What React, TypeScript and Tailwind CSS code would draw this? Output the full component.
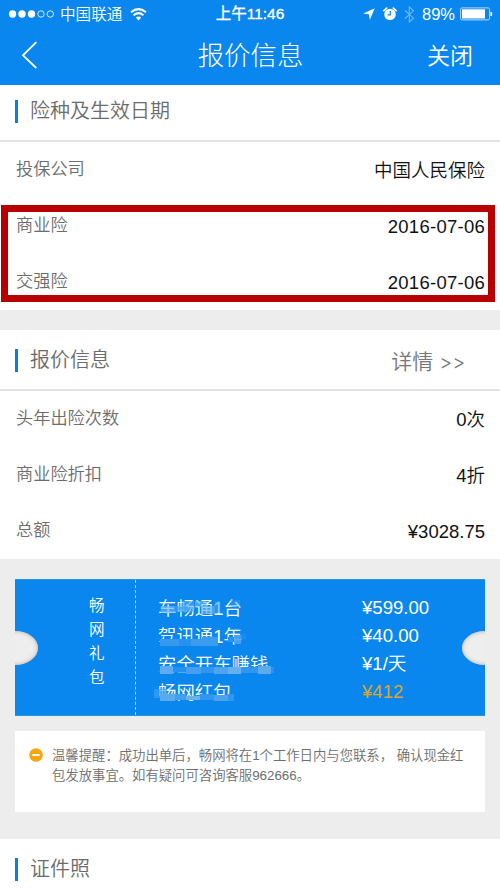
import React from 'react';

interface RowProps {
  label: string;
  value: string;
  wide?: boolean;
}

const Row: React.FC<RowProps> = ({ label, value, wide }) => (
  <div className="h-14 flex items-center justify-between pt-0.5 pl-4 pr-[15px]">
    <span className="pb-1 text-[17.2px] leading-6 text-[#6c6c6c]">{label}</span>
    <span
      className={`text-[18.5px] leading-6 text-[#111] ${wide ? 'tracking-[0.26px]' : ''}`}
    >
      {value}
    </span>
  </div>
);

interface SectionTitleProps {
  title: string;
  extra?: string;
}

const SectionTitle: React.FC<SectionTitleProps> = ({ title, extra }) => (
  <div className="flex items-center justify-between pl-[15px] pr-[35px]">
    <div className="flex items-center">
      <span className="w-[3px] h-[23px] bg-[#0a80dc]" />
      <h2 className="ml-3 text-[20px] leading-6 text-[#6b6b6b]">{title}</h2>
    </div>
    {extra && (
      <span className="pt-1 flex items-baseline gap-[6px] text-[21px] leading-6 text-[#777]">
        {extra}
        <span className="font-['Inter'] font-light text-[20px] tracking-[-0.2px]">
          &gt;&gt;
        </span>
      </span>
    )}
  </div>
);

const gifts = [
  { name: '车畅通1台', price: '¥599.00' },
  { name: '驾讯通1年', price: '¥40.00' },
  { name: '安全开车赚钱', price: '¥1/天' },
  { name: '畅网红包', price: '¥412', highlight: true },
];

// x, y, width, height, fill, opacity
const mosaic: [number, number, number, number, string, number][] = [
  [5, 27, 14, 7, '#62b1f6', 0.65],
  [19, 27, 13, 6, '#3b9cf3', 0.65],
  [26, 22, 12, 11, '#4ca6f4', 0.6],
  [39, 22, 12, 6, '#71bbf8', 0.6],
  [45, 27, 14, 8, '#61b2f7', 0.65],
  [59, 22, 5, 12, '#3c9df4', 0.6],
  [75, 21, 9, 7, '#3c9df4', 0.4],
  [4, 60, 19, 7, '#3698ef', 1],
  [23, 60, 12, 7, '#2791f0', 1],
  [35, 60, 27, 7, '#3b9bef', 1],
  [46, 58, 16, 4, '#3c9df3', 1],
  [72, 58, 6, 5, '#2993f1', 1],
  [78, 56, 7, 9, '#4aa4f2', 0.9],
  [85, 55, 5, 5, '#2490f1', 0.7],
  [4, 87, 13, 8, '#5eacef', 1],
  [17, 88, 13, 5, '#2490f1', 1],
  [30, 88, 15, 7, '#469fec', 1],
  [45, 88, 13, 6, '#3196ef', 1],
  [58, 88, 14, 7, '#4ea5ee', 1],
  [72, 88, 13, 7, '#66b0ed', 1],
  [85, 88, 17, 6, '#3196ef', 1],
  [102, 87, 13, 8, '#5aaaec', 1],
  [115, 88, 3, 6, '#2892f1', 1],
  [-2, 110, 13, 9, '#3f9eef', 0.65],
  [4, 115, 15, 7, '#5caaee', 1],
  [19, 115, 11, 6, '#429eef', 1],
  [30, 117, 14, 4, '#68b1ec', 1],
  [44, 115, 14, 6, '#3497ef', 1],
  [58, 116, 14, 6, '#4ba2ed', 1],
  [72, 115, 6, 7, '#3196ef', 1],
];

const StatusBar: React.FC = () => (
  <div className="h-7 grid grid-cols-[1fr_auto_1fr] items-center pl-[9px] pr-[7px] text-[15.6px] leading-5">
    <div className="flex items-center">
      <svg width="46" height="10" viewBox="0 0 46 10" fill="none">
        <circle cx="3.5" cy="5" r="3.7" fill="white" />
        <circle cx="13" cy="5" r="3.7" fill="white" />
        <circle cx="22.5" cy="5" r="3.7" fill="white" />
        <circle cx="32" cy="5" r="3.2" stroke="white" strokeWidth="0.8" />
        <circle cx="41.3" cy="5" r="3.2" stroke="white" strokeWidth="0.8" />
      </svg>
      <span className="ml-[5px] pt-0.5">中国联通</span>
      <svg className="ml-[8px]" width="17" height="13" viewBox="0 0 17 13" fill="none">
        <path d="M1 4.3 Q8.5 -2 16 4.3" stroke="white" strokeWidth="2" />
        <path d="M3.6 7.3 Q8.5 3 13.4 7.3" stroke="white" strokeWidth="2" />
        <path d="M5.8 9.6 Q8.5 7.6 11.2 9.6 L8.5 12.5 Z" fill="white" />
      </svg>
    </div>
    <span className="pr-0.5 text-[15.5px] font-normal [-webkit-text-stroke:0.3px_white]">
      上午11:46
    </span>
    <div className="flex items-center justify-end">
      <svg width="12" height="12" viewBox="0 0 12 12">
        <path d="M11.7 0.3 L6.9 11.7 L5.8 6.3 L0.3 5.4 Z" fill="white" />
      </svg>
      <svg className="ml-[8px]" width="14" height="14" viewBox="0 0 14 14" fill="none">
        <circle cx="7" cy="7.4" r="5.7" fill="white" />
        <path d="M0.9 3.7 L3.7 1.1 M13.1 3.7 L10.3 1.1" stroke="white" strokeWidth="1.6" strokeLinecap="round" />
        <path d="M7.3 4 V7.8 H4.6" stroke="#0b86ee" strokeWidth="1.2" />
      </svg>
      <svg className="ml-[7px]" width="11" height="17" viewBox="0 0 11 17" fill="none">
        <path d="M1 4.5 L9.5 12.2 L5.3 16 V1 L9.5 4.8 L1 12.5" stroke="#6db9f7" strokeWidth="1.1" />
      </svg>
      <span className="ml-[7px] text-[16.5px]">89%</span>
      <svg className="ml-[5px]" width="33" height="14" viewBox="0 0 33 14" fill="none">
        <rect x="0.6" y="0.9" width="29" height="12" rx="1.5" stroke="#b3dafa" />
        <rect x="2" y="2.3" width="23" height="9.2" fill="white" />
        <path d="M31 5 Q33 7 31 9 Z" fill="white" stroke="white" />
      </svg>
    </div>
  </div>
);

const Ticket: React.FC = () => (
  <div className="relative h-[137px] flex overflow-hidden bg-[#0a87ef] border-y border-[#2c92dd] text-white">
    <div className="w-[121px] flex justify-end pt-[14px] pr-[30px] border-r border-dashed border-[#a5d5fa]">
      <div className="w-4 text-[15.5px] leading-6">畅网礼包</div>
    </div>
    <div className="w-[226px] pt-[15px] pl-[22px] text-[18.4px] leading-7">
      {gifts.map(gift => (
        <p key={gift.name}>{gift.name}</p>
      ))}
    </div>
    <div className="pt-[14px] text-[18.6px] leading-7">
      {gifts.map(gift => (
        <p key={gift.name} className={gift.highlight ? 'text-[#dda52c]' : ''}>
          {gift.price}
        </p>
      ))}
    </div>
    <svg
      className="absolute left-[141px] top-0 overflow-visible"
      width="120"
      height="137"
    >
      {mosaic.map(([x, y, width, height, fill, opacity], i) => (
        <rect
          key={i}
          x={x}
          y={y - 1}
          width={width}
          height={height}
          fill={fill}
          opacity={opacity}
        />
      ))}
    </svg>
    <div className="absolute -left-[23px] top-[51px] w-[46px] h-[34px] rounded-[50%] bg-[#eee] shadow-[inset_0_0_4px_#b5a9a2]" />
    <div className="absolute -right-[23px] top-[51px] w-[46px] h-[34px] rounded-[50%] bg-[#eee] shadow-[inset_0_0_4px_#b5a9a2]" />
  </div>
);

const App: React.FC = () => (
  <div className="w-[500px] h-[889px] overflow-hidden bg-[#ededed] font-['Liberation_Sans','Noto_Sans_CJK_SC',sans-serif] font-[350]">
    <header className="h-[85px] bg-[#0a87ef] text-white">
      <StatusBar />
      <div className="h-[55px] grid grid-cols-[1fr_auto_1fr] items-center pl-[21px] pr-[27px]">
        <svg className="-mt-0.5" width="17" height="28" viewBox="0 0 17 28" fill="none">
          <path d="M15.3 1.2 L2 14.3 L15.3 27" stroke="white" strokeWidth="1.8" />
        </svg>
        <h1 className="pl-[7px] text-[26.4px] leading-8 font-light">报价信息</h1>
        <span className="justify-self-end text-[23px] leading-8">关闭</span>
      </div>
    </header>

    <section className="relative bg-white">
      <div className="h-[57px] pt-[14px] border-b-2 border-[#e4e4e4]">
        <SectionTitle title="险种及生效日期" />
      </div>
      <Row label="投保公司" value="中国人民保险" />
      <Row label="商业险" value="2016-07-06" wide />
      <Row label="交强险" value="2016-07-06" wide />
      <div className="absolute left-px top-[120px] w-[494px] h-[97px] border-7 border-[#b90000]" />
    </section>

    <section className="mt-5 bg-white">
      <div className="h-[61px] pt-[16px] border-b-2 border-[#e4e4e4]">
        <SectionTitle title="报价信息" extra="详情" />
      </div>
      <Row label="头年出险次数" value="0次" />
      <Row label="商业险折扣" value="4折" />
      <Row label="总额" value="¥3028.75" />
    </section>

    <div className="px-[15px] pt-5">
      <Ticket />
      <div className="mt-[15px] h-[81px] flex bg-white pt-[15px] pl-[14px]">
        <svg className="mt-[2px] shrink-0" width="14" height="14" viewBox="0 0 14 14">
          <circle cx="7" cy="7" r="6.8" fill="#f7a60d" />
          <rect x="3.3" y="6" width="7.4" height="1.9" fill="white" />
        </svg>
        <p className="ml-[9px] text-[13.35px] leading-5 text-[#6e6e6e] whitespace-nowrap">
          温馨提醒：成功出单后，畅网将在1个工作日内与您联系， 确认现金红
          <br />
          包发放事宜。如有疑问可咨询客服962666。
        </p>
      </div>
    </div>

    <section className="mt-[27px] h-[50px] bg-white pt-[18px]">
      <SectionTitle title="证件照" />
    </section>
  </div>
);

export default App;
